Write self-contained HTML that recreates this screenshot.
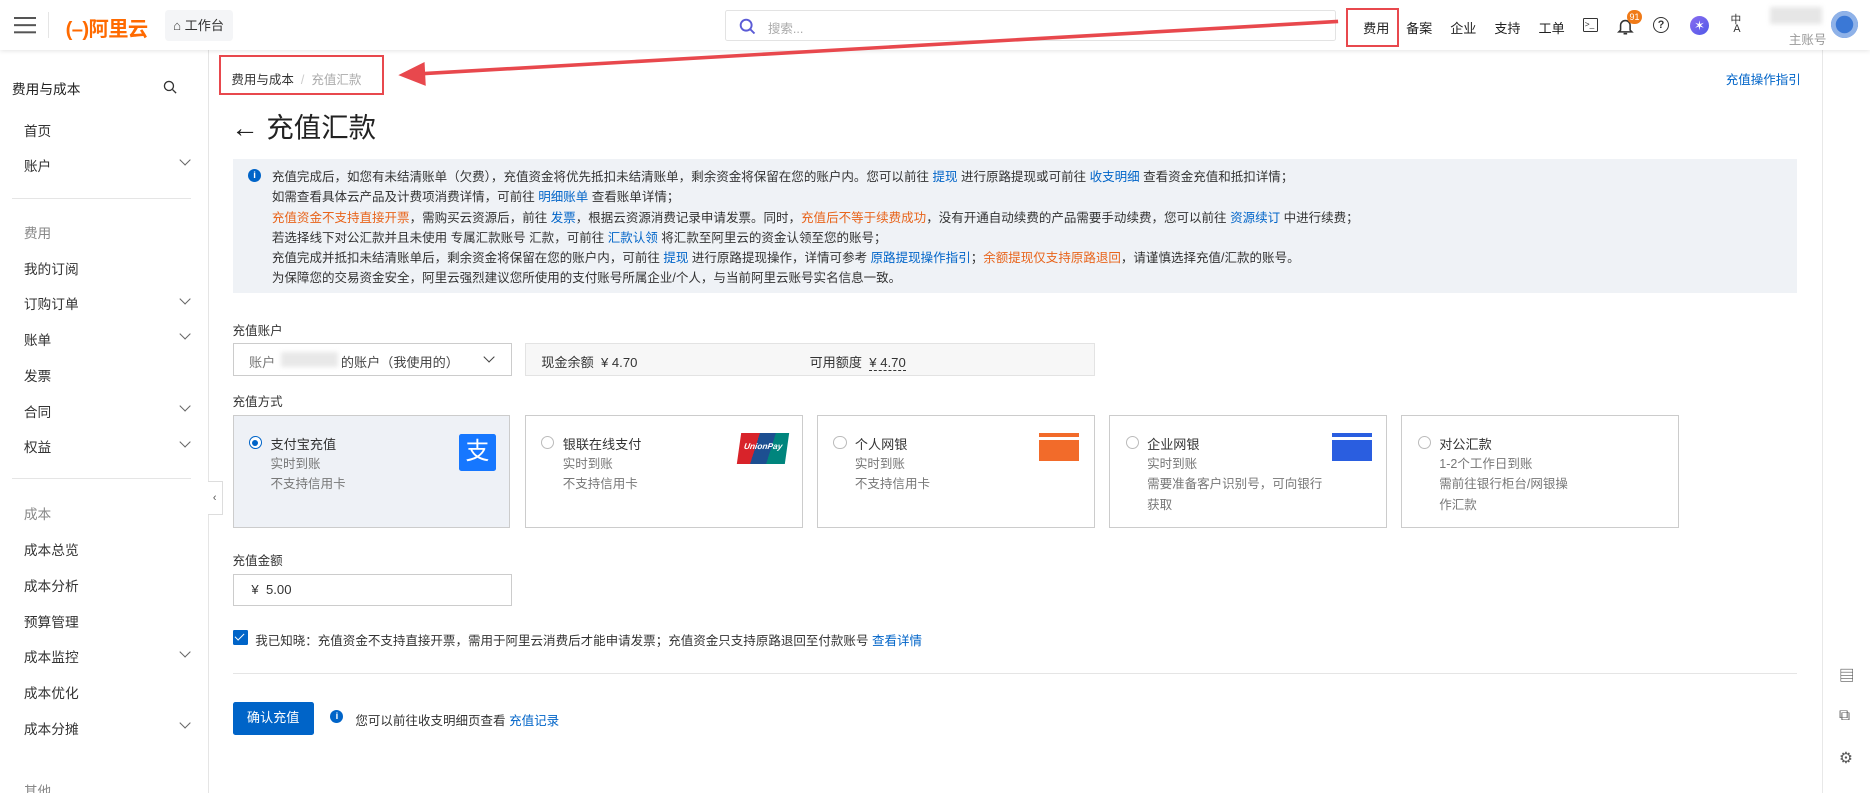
<!DOCTYPE html>
<html><head><meta charset="utf-8"><style>
html,body{margin:0;padding:0;background:#fff;overflow:hidden}
body{width:1870px;height:793px}
#r{zoom:1.19260;position:relative;width:1568px;height:665px;font-family:"Liberation Sans","Noto Sans CJK SC",sans-serif;color:#333;font-size:11px;overflow:hidden}
.a{position:absolute;white-space:nowrap}
.lk{color:#0064c8}.or{color:#e8641b}
.sb{position:absolute;left:0;top:42px;width:174px;height:623px;border-right:1px solid #e5e5e5;background:#fff}
.si{position:absolute;left:20px;font-size:11.5px;color:#333}
.sg{color:#888}
.chev{position:absolute;left:152px;width:6px;height:6px;border-right:1px solid #666;border-bottom:1px solid #666;transform:rotate(45deg)}
.card{position:absolute;top:348px;width:233px;height:95px;border:1px solid #ccc;background:#fff;box-sizing:border-box}
.card .rd{position:absolute;left:13px;top:17px;width:11px;height:11px;border:1px solid #bbb;border-radius:50%;box-sizing:border-box}
.card .t{position:absolute;left:31px;top:15px;font-size:11px;color:#333}
.card .s{position:absolute;left:31px;top:32px;font-size:10.5px;color:#777;line-height:17px;white-space:normal;width:150px}
.nv{position:absolute;top:15px;font-size:11px;color:#222}
</style></head><body><div id="r">
<div class="a" style="left:0;top:0;width:1568px;height:42px;background:#fff;box-shadow:0 1px 4px rgba(0,0,0,.12);z-index:2">
 <div class="a" style="left:12px;top:14px;width:18px;height:2px;background:#555;box-shadow:0 6px 0 #555,0 12px 0 #555"></div>
 <div class="a" style="left:40px;top:10px;width:1px;height:22px;background:#e5e5e5"></div>
 <div class="a" style="left:55px;top:10px;font-size:17px;font-weight:bold;color:#ff6a00;letter-spacing:-0.5px">(–)阿里云</div>
 <div class="a" style="left:138px;top:8px;width:57px;height:26px;background:#f4f5f7;border-radius:3px;font-size:11px;line-height:26px;text-align:center;color:#333">⌂ 工作台</div>
 <div class="a" style="left:608px;top:8px;width:512px;height:26px;border:1px solid #e3e3e3;box-sizing:border-box;border-radius:2px">
  <svg class="a" style="left:11px;top:6px" width="14" height="14" viewBox="0 0 14 14"><circle cx="6" cy="6" r="4.6" fill="none" stroke="#5b5bd6" stroke-width="1.6"/><path d="M9.5 9.5L13 13" stroke="#5b5bd6" stroke-width="1.6"/></svg>
  <span class="a" style="left:35px;top:6px;color:#aaa;font-size:10.5px">搜索...</span></div>
 <div class="a" style="left:1129px;top:7px;width:44px;height:32px;border:2.5px solid #e8484d;box-sizing:border-box"></div>
 <span class="nv" style="left:1143px">费用</span><span class="nv" style="left:1179px">备案</span><span class="nv" style="left:1216px">企业</span><span class="nv" style="left:1253px">支持</span><span class="nv" style="left:1290px">工单</span>
 <div class="a" style="left:1327px;top:15px;width:11px;height:10px;border:1.3px solid #333;border-radius:1px;font-size:7px;line-height:9px;text-indent:1px">&gt;_</div>
 <svg class="a" style="left:1356px;top:14px" width="14" height="16" viewBox="0 0 14 16"><path d="M3 11V7a4 4 0 018 0v4l1.5 1.5h-11z M5.5 14h3" fill="none" stroke="#333" stroke-width="1.3"/></svg>
 <div class="a" style="left:1364px;top:8px;width:13px;height:12px;border-radius:6px;background:#f07a18;color:#fff;font-size:7.5px;line-height:12px;text-align:center">91</div>
 <div class="a" style="left:1386px;top:14px;width:12px;height:12px;border:1.3px solid #333;border-radius:50%;font-size:9px;line-height:12px;text-align:center;font-weight:bold">?</div>
 <div class="a" style="left:1417px;top:13px;width:16px;height:16px;border-radius:50%;background:linear-gradient(135deg,#8a6cf0,#4f59e8);color:#fff;font-size:11px;line-height:16px;text-align:center">✶</div>
 <span class="a" style="left:1451px;top:13px;font-size:9px;line-height:8px;color:#333">中<br>&nbsp;A</span>
 <div class="a" style="left:1484px;top:6px;width:44px;height:14px;background:#e6e6e6;filter:blur(2px)"></div>
 <span class="a" style="left:1500px;top:24px;color:#999;font-size:10.5px">主账号</span>
 <div class="a" style="left:1535px;top:9px;width:23px;height:23px;border-radius:50%;background:#3a78d6;box-shadow:inset 0 0 0 4px #8fb2e8"></div>
</div>
<svg class="a" style="left:0;top:0;z-index:3" width="1568" height="100"><line x1="1122" y1="18" x2="350" y2="62" stroke="#e8484d" stroke-width="3"/><path d="M334 63L356 52L357 72Z" fill="#e8484d"/></svg>
<div class="sb">
 <span class="si" style="left:10px;top:23px;font-size:11.5px;color:#222">费用与成本</span>
 <svg class="a" style="left:137px;top:25px" width="12" height="12" viewBox="0 0 12 12"><circle cx="5" cy="5" r="3.8" fill="none" stroke="#333" stroke-width="1.1"/><path d="M8 8l3 3" stroke="#333" stroke-width="1.1"/></svg>
 <span class="si" style="top:59px">首页</span>
 <span class="si" style="top:88px">账户</span><i class="chev" style="top:89px"></i>
 <div class="a" style="left:10px;top:124px;width:150px;height:1px;background:#e5e5e5"></div>
 <span class="si sg" style="top:144px">费用</span>
 <span class="si" style="top:174px">我的订阅</span>
 <span class="si" style="top:204px">订购订单</span><i class="chev" style="top:205px"></i>
 <span class="si" style="top:234px">账单</span><i class="chev" style="top:235px"></i>
 <span class="si" style="top:264px">发票</span>
 <span class="si" style="top:294px">合同</span><i class="chev" style="top:295px"></i>
 <span class="si" style="top:324px">权益</span><i class="chev" style="top:325px"></i>
 <div class="a" style="left:10px;top:359px;width:150px;height:1px;background:#e5e5e5"></div>
 <span class="si sg" style="top:380px">成本</span>
 <span class="si" style="top:410px">成本总览</span>
 <span class="si" style="top:440px">成本分析</span>
 <span class="si" style="top:470px">预算管理</span>
 <span class="si" style="top:500px">成本监控</span><i class="chev" style="top:501px"></i>
 <span class="si" style="top:530px">成本优化</span>
 <span class="si" style="top:560px">成本分摊</span><i class="chev" style="top:561px"></i>
 <span class="si sg" style="top:612px">其他</span>
</div>
<div class="a" style="left:174px;top:403px;width:12px;height:27px;border:1px solid #ddd;border-left:0;background:#fff;font-size:9px;line-height:27px;text-align:center;color:#555">‹</div>
<div class="a" style="left:1528px;top:42px;width:1px;height:623px;background:#e8e8e8"></div>
<span class="a" style="left:1542px;top:557px;font-size:13px;color:#555">▤</span>
<span class="a" style="left:1542px;top:593px;font-size:13px;color:#555">⧉</span>
<span class="a" style="left:1542px;top:628px;font-size:13px;color:#555">⚙</span>
<div class="a" style="left:184px;top:46px;width:138px;height:34px;border:2.5px solid #e8484d;box-sizing:border-box"></div>
<span class="a" style="left:194px;top:58px;font-size:10.5px;color:#333">费用与成本 <span style="color:#ccc">&nbsp;/&nbsp;</span> <span style="color:#aaa">充值汇款</span></span>
<span class="a lk" style="left:1447px;top:58px;font-size:10.5px">充值操作指引</span>
<span class="a" style="left:194px;top:88px;font-size:23px;color:#222">← 充值汇款</span>
<div class="a" style="left:195px;top:133px;width:1312px;height:113px;background:#eff2f6"></div>
<div class="a" style="left:208px;top:142px;width:11px;height:11px;border-radius:50%;background:#0064c8;color:#fff;font-size:8px;line-height:11px;text-align:center;font-weight:bold">i</div>
<div class="a" style="left:228px;top:140px;font-size:10.5px;line-height:17px;color:#333">
充值完成后，如您有未结清账单（欠费），充值资金将优先抵扣未结清账单，剩余资金将保留在您的账户内。您可以前往 <span class="lk">提现</span> 进行原路提现或可前往 <span class="lk">收支明细</span> 查看资金充值和抵扣详情；<br>
如需查看具体云产品及计费项消费详情，可前往 <span class="lk">明细账单</span> 查看账单详情；<br>
<span class="or">充值资金不支持直接开票</span>，需购买云资源后，前往 <span class="lk">发票</span>，根据云资源消费记录申请发票。同时，<span class="or">充值后不等于续费成功</span>，没有开通自动续费的产品需要手动续费，您可以前往 <span class="lk">资源续订</span> 中进行续费；<br>
若选择线下对公汇款并且未使用 专属汇款账号 汇款，可前往 <span class="lk">汇款认领</span> 将汇款至阿里云的资金认领至您的账号；<br>
充值完成并抵扣未结清账单后，剩余资金将保留在您的账户内，可前往 <span class="lk">提现</span> 进行原路提现操作，详情可参考 <span class="lk">原路提现操作指引</span>；<span class="or">余额提现仅支持原路退回</span>，请谨慎选择充值/汇款的账号。<br>
为保障您的交易资金安全，阿里云强烈建议您所使用的支付账号所属企业/个人，与当前阿里云账号实名信息一致。</div>
<span class="a" style="left:195px;top:268px;font-size:10.5px">充值账户</span>
<div class="a" style="left:195px;top:288px;width:234px;height:27px;border:1px solid #ccc;box-sizing:border-box;background:#fff">
 <span class="a" style="left:13px;top:6px;color:#777">账户</span>
 <div class="a" style="left:40px;top:6px;width:48px;height:13px;background:#e8e8e8;filter:blur(2px)"></div>
 <span class="a" style="left:90px;top:6px;color:#444">的账户（我使用的）</span>
 <i class="a" style="left:211px;top:7px;width:6px;height:6px;border-right:1.2px solid #444;border-bottom:1.2px solid #444;transform:rotate(45deg)"></i>
</div>
<div class="a" style="left:440px;top:288px;width:478px;height:27px;border:1px solid #e3e3e3;box-sizing:border-box;background:#f7f7f7">
 <span class="a" style="left:13px;top:6px;color:#333">现金余额 &nbsp;¥ 4.70</span>
 <span class="a" style="left:238px;top:6px;color:#333">可用额度 &nbsp;<span style="border-bottom:1px dashed #333">¥ 4.70</span></span>
</div>
<span class="a" style="left:195px;top:328px;font-size:10.5px">充值方式</span>
<div class="card" style="left:195px;background:#eef1f6"><div class="rd" style="border:1px solid #0064c8;background:#fff"><i class="a" style="left:2px;top:2px;width:5px;height:5px;border-radius:50%;background:#0064c8"></i></div><span class="t">支付宝充值</span><div class="s">实时到账<br>不支持信用卡</div>
 <div class="a" style="left:189px;top:15px;width:31px;height:31px;background:#1677ff;color:#fff;font-size:20px;line-height:31px;text-align:center;border-radius:2px">支</div></div>
<div class="card" style="left:440px"><div class="rd"></div><span class="t">银联在线支付</span><div class="s">实时到账<br>不支持信用卡</div>
 <div class="a" style="left:179px;top:14px;width:40px;height:26px;background:linear-gradient(100deg,#d8232a 0 35%,#1d4f91 35% 65%,#00857d 65%);transform:skewX(-8deg);color:#fff;font-size:7px;font-style:italic;line-height:22px;text-align:center;font-weight:bold">UnionPay</div></div>
<div class="card" style="left:685px"><div class="rd"></div><span class="t">个人网银</span><div class="s">实时到账<br>不支持信用卡</div>
 <div class="a" style="left:185px;top:14px;width:34px;height:4px;background:#f26b2a"></div><div class="a" style="left:185px;top:20px;width:34px;height:18px;background:#f26b2a"></div></div>
<div class="card" style="left:930px"><div class="rd"></div><span class="t">企业网银</span><div class="s">实时到账<br>需要准备客户识别号，可向银行获取</div>
 <div class="a" style="left:186px;top:14px;width:34px;height:4px;background:#2a5ee0"></div><div class="a" style="left:186px;top:20px;width:34px;height:18px;background:#2a5ee0"></div></div>
<div class="card" style="left:1175px"><div class="rd"></div><span class="t">对公汇款</span><div class="s" style="width:115px">1-2个工作日到账<br>需前往银行柜台/网银操作汇款</div></div>
<span class="a" style="left:195px;top:461px;font-size:10.5px">充值金额</span>
<div class="a" style="left:195px;top:481px;width:234px;height:27px;border:1px solid #ccc;box-sizing:border-box"><span class="a" style="left:15px;top:6px">¥ &nbsp;5.00</span></div>
<div class="a" style="left:195px;top:528px;width:13px;height:13px;background:#0064c8;border-radius:1px"><i class="a" style="left:4px;top:1px;width:3px;height:7px;border-right:1.6px solid #fff;border-bottom:1.6px solid #fff;transform:rotate(45deg)"></i></div>
<span class="a" style="left:214px;top:528px;font-size:10.5px">我已知晓：充值资金不支持直接开票，需用于阿里云消费后才能申请发票；充值资金只支持原路退回至付款账号 <span class="lk">查看详情</span></span>
<div class="a" style="left:195px;top:564px;width:1312px;height:1px;background:#e5e5e5"></div>
<div class="a" style="left:195px;top:589px;width:68px;height:27px;background:#0064c8;border-radius:2px;color:#fff;font-size:11px;line-height:27px;text-align:center">确认充值</div>
<div class="a" style="left:277px;top:595px;width:11px;height:11px;border-radius:50%;background:#0064c8;color:#fff;font-size:8px;line-height:11px;text-align:center;font-weight:bold">i</div>
<span class="a" style="left:298px;top:595px;font-size:10.5px">您可以前往收支明细页查看 <span class="lk">充值记录</span></span>
</div></body></html>
